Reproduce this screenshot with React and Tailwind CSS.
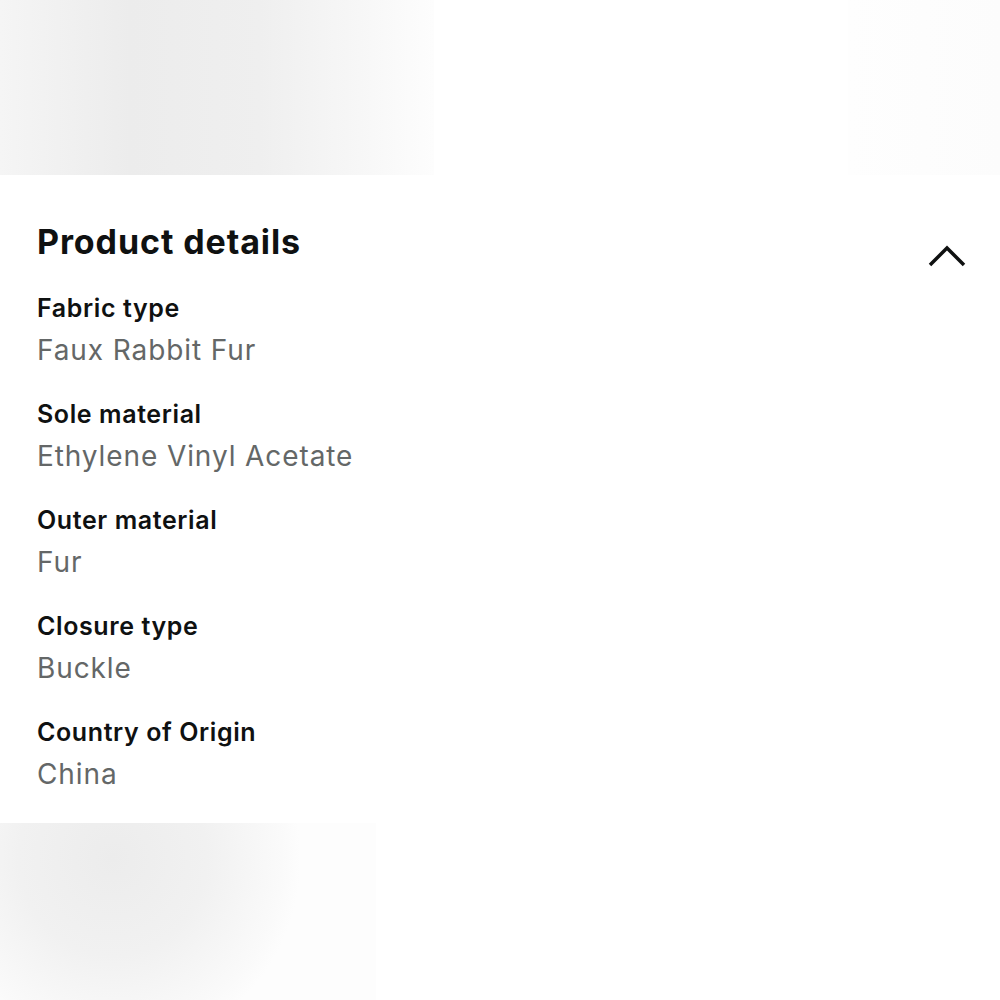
import React from 'react'

const details = [
  { label: 'Fabric type', value: 'Faux Rabbit Fur' },
  { label: 'Sole material', value: 'Ethylene Vinyl Acetate' },
  { label: 'Outer material', value: 'Fur' },
  { label: 'Closure type', value: 'Buckle' },
  { label: 'Country of Origin', value: 'China' },
]

export default function App() {
  return (
    <div className="w-[1000px] h-[1000px] flex flex-col bg-white overflow-hidden font-['Inter',sans-serif]">
      {/* blurred photo strip above */}
      <div className="h-[175px] flex flex-shrink-0">
        <div className="w-[434px] h-full bg-[linear-gradient(90deg,#f5f5f5_0%,#ececec_30%,#efefef_60%,#fdfdfd_100%)]" />
        <div className="flex-1 h-full bg-white" />
        <div className="w-[152px] h-full bg-[linear-gradient(90deg,#fefefe_0%,#fdfdfd_50%,#fcfcfc_100%)]" />
      </div>

      {/* details panel */}
      <div className="h-[648px] flex-shrink-0 bg-white px-[37px] pt-[48px]">
        <div className="flex items-start justify-between">
          <h2 className="text-[34px] leading-[38px] font-bold tracking-[0.9px] text-[#0f1111]">Product details</h2>
          <svg width="40" height="26" viewBox="0 0 40 26" className="mt-[20px] mr-[-4px]">
            <path d="M3 22 L20 5 L37 22" fill="none" stroke="#0f1111" strokeWidth="3.5" />
          </svg>
        </div>

        <div className="mt-[23px] flex flex-col gap-[30px]">
          {details.map((d) => (
            <div key={d.label} className="flex flex-col">
              <span className="text-[25px] leading-[32px] font-semibold tracking-[0.6px] text-[#0f1111]">{d.label}</span>
              <span className="mt-[8px] text-[28px] leading-[36px] tracking-[0.9px] text-[#646767]">{d.value}</span>
            </div>
          ))}
        </div>
      </div>

      {/* blurred photo strip below */}
      <div className="flex-1 flex">
        <div className="w-[376px] h-full bg-[radial-gradient(ellipse_50%_110%_at_30%_20%,#ececec_0%,#f1f1f1_50%,#fafafa_90%,#fdfdfd_100%)]" />
        <div className="flex-1 h-full bg-white" />
      </div>
    </div>
  )
}
